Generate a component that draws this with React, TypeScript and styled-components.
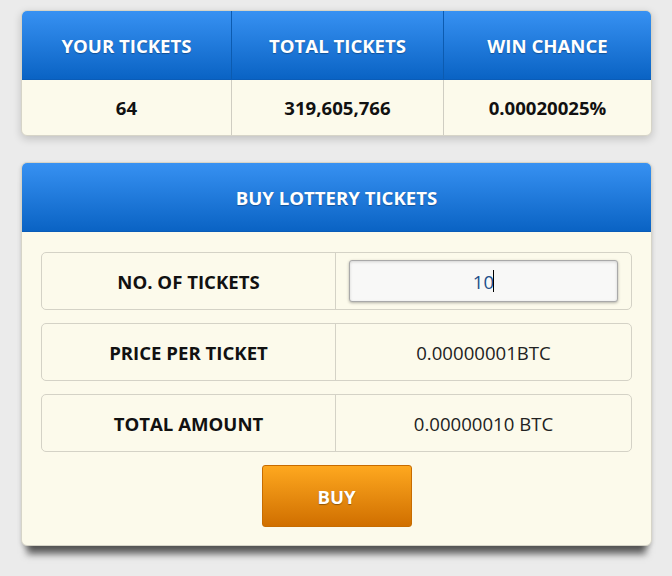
import React from "react";
import styled, { createGlobalStyle } from "styled-components";

const Global = createGlobalStyle`
  html, body { margin: 0; padding: 0; }
  body {
    background: #ebebeb;
    font-family: "Open Sans", "Noto Sans", sans-serif;
    width: 672px;
    height: 576px;
    overflow: hidden;
  }
`;

const Page = styled.div`
  padding: 10px 20px 0 21px;
  display: flex;
  flex-direction: column;
  gap: 26px;
  width: 631px;
`;

const Card = styled.div<{ $deep?: boolean }>`
  background: #fcfaeb;
  border-radius: 6px;
  border: 1px solid #d6d4c8;
  overflow: hidden;
  box-shadow: ${(p) =>
    p.$deep
      ? "0 14px 7px -6px rgba(0,0,0,0.6), 0 2px 4px rgba(0,0,0,0.15)"
      : "0 3px 8px rgba(0,0,0,0.18)"};
`;

const Header = styled.div`
  background: linear-gradient(#3791f2, #0a63c4);
  height: 69px;
  border-bottom: 1px solid #0a5cb8;
  box-sizing: border-box;
`;

const HeadGrid = styled(Header)`
  display: grid;
  grid-template-columns: 209px 212px 1fr;
`;

const HeadCell = styled.div`
  display: flex;
  align-items: center;
  justify-content: center;
  color: #fff;
  font-weight: 700;
  font-size: 18.6px;
  padding-top: 1px;
  text-shadow: 0 1px 1px rgba(0,0,0,0.3);
  & + & { border-left: 1px solid #0c5bb0; }
`;

const Title = styled(Header)`
  display: flex;
  align-items: center;
  justify-content: center;
  color: #fff;
  font-weight: 700;
  font-size: 18.6px;
  padding-top: 1px;
  text-shadow: 0 1px 1px rgba(0,0,0,0.3);
`;

const ValueGrid = styled.div`
  display: grid;
  grid-template-columns: 209px 212px 1fr;
  height: 55px;
`;

const ValueCell = styled.div`
  display: flex;
  align-items: center;
  justify-content: center;
  font-weight: 700;
  font-size: 18.6px;
  color: #111;
  & + & { border-left: 1px solid #cfcdc2; }
`;

const Body = styled.div`
  padding: 20px 19px 18px 19px;
  display: flex;
  flex-direction: column;
  gap: 13px;
`;

const Row = styled.div`
  display: grid;
  grid-template-columns: 294px 1fr;
  height: 58px;
  border: 1px solid #d4d2c6;
  border-radius: 5px;
  box-sizing: border-box;
`;

const Label = styled.div`
  display: flex;
  align-items: center;
  justify-content: center;
  font-weight: 700;
  font-size: 18.6px;
  color: #111;
  border-right: 1px solid #d4d2c6;
`;

const Value = styled.div`
  display: flex;
  align-items: center;
  justify-content: center;
  font-size: 18.6px;
  color: #222;
`;

const Input = styled.div`
  width: 269px;
  height: 42px;
  box-sizing: border-box;
  background: #f8f8f7;
  border: 1px solid #a9a9a9;
  border-radius: 3px;
  box-shadow: inset 0 1px 3px rgba(0,0,0,0.15), 0 1px 3px rgba(0,0,0,0.3);
  display: flex;
  align-items: center;
  justify-content: center;
  font-size: 18.6px;
  color: #1d4f8a;
`;

const Caret = styled.span`
  display: inline-block;
  width: 1px;
  height: 22px;
  background: #000;
  margin-left: -1px;
`;

const BtnWrap = styled.div`
  display: flex;
  justify-content: center;
`;

const BuyButton = styled.button`
  width: 150px;
  height: 62px;
  border: 1px solid #c76c00;
  border-radius: 3px;
  background: linear-gradient(#fea81f, #d06f00);
  color: #fff;
  font-family: "Open Sans", sans-serif;
  font-weight: 700;
  font-size: 18.6px;
  text-shadow: 0 1px 1px rgba(0,0,0,0.35);
  cursor: pointer;
`;

export default function App() {
  return (
    <>
      <Global />
      <Page>
        <Card>
          <HeadGrid>
            <HeadCell>YOUR TICKETS</HeadCell>
            <HeadCell>TOTAL TICKETS</HeadCell>
            <HeadCell>WIN CHANCE</HeadCell>
          </HeadGrid>
          <ValueGrid>
            <ValueCell>64</ValueCell>
            <ValueCell>319,605,766</ValueCell>
            <ValueCell>0.00020025%</ValueCell>
          </ValueGrid>
        </Card>
        <Card $deep>
          <Title>BUY LOTTERY TICKETS</Title>
          <Body>
            <Row>
              <Label>NO. OF TICKETS</Label>
              <Value>
                <Input>
                  10<Caret />
                </Input>
              </Value>
            </Row>
            <Row>
              <Label>PRICE PER TICKET</Label>
              <Value>0.00000001BTC</Value>
            </Row>
            <Row>
              <Label>TOTAL AMOUNT</Label>
              <Value>0.00000010 BTC</Value>
            </Row>
            <BtnWrap>
              <BuyButton>BUY</BuyButton>
            </BtnWrap>
          </Body>
        </Card>
      </Page>
    </>
  );
}
